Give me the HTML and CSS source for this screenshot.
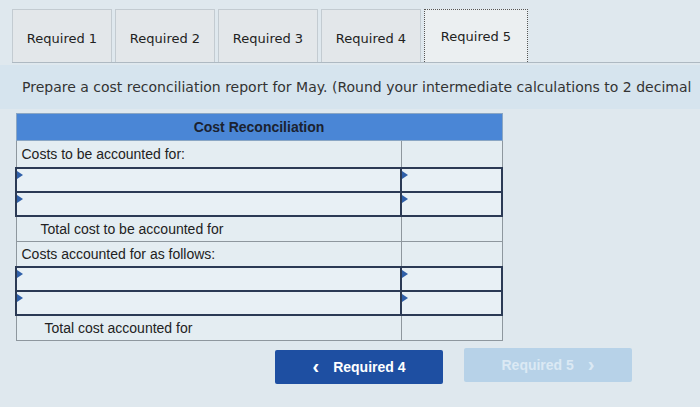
FILE: index.html
```html
<!DOCTYPE html>
<html>
<head>
<meta charset="utf-8">
<link rel="stylesheet" href="styles.css">
</head>
<body>
<div class="page">
  <div class="tabs">
    <div class="tab">Required 1</div>
    <div class="tab">Required 2</div>
    <div class="tab">Required 3</div>
    <div class="tab">Required 4</div>
    <div class="tab active">Required 5</div>
  </div>
  <div class="instr">Prepare a cost reconciliation report for May. (Round your intermediate calculations to 2 decimal</div>
  <table class="recon">
    <colgroup><col class="c1"><col class="c2"></colgroup>
    <thead>
      <tr><th colspan="2">Cost Reconciliation</th></tr>
    </thead>
    <tbody>
      <tr class="label first"><td class="lbl">Costs to be accounted for:</td><td></td></tr>
      <tr class="inp"><td><span class="mark"></span></td><td><span class="mark"></span></td></tr>
      <tr class="inp"><td><span class="mark"></span></td><td><span class="mark"></span></td></tr>
      <tr class="label"><td class="lbl ind1">Total cost to be accounted for</td><td></td></tr>
      <tr class="label"><td class="lbl">Costs accounted for as follows:</td><td></td></tr>
      <tr class="inp"><td><span class="mark"></span></td><td><span class="mark"></span></td></tr>
      <tr class="inp"><td><span class="mark"></span></td><td><span class="mark"></span></td></tr>
      <tr class="label"><td class="lbl ind2">Total cost accounted for</td><td></td></tr>
    </tbody>
  </table>
  <div class="nav">
    <button class="btn prev"><span class="chev">&lsaquo;</span>Required 4</button>
    <button class="btn next">Required 5<span class="chev">&rsaquo;</span></button>
  </div>
</div>
</body>
</html>
```
FILE: styles.css
```css
html, body {
  margin: 0;
  padding: 0;
  background: #dfe8ee;
  width: 700px;
  height: 407px;
  overflow: hidden;
}
.page {
  padding: 9px 0 0 12px;
  font-family: "DejaVu Sans", Verdana, sans-serif;
}
.tabs {
  display: flex;
  height: 53px;
  border-bottom: 1px solid #aeb9c2;
  margin-right: -12px;
}
.tab {
  width: 100px;
  box-sizing: border-box;
  border: 1px solid #c3cbd1;
  border-bottom: none;
  background: #e3e7ea;
  margin-right: 3px;
  display: flex;
  align-items: center;
  justify-content: center;
  padding-top: 4px;
  font-size: 13px;
  color: #222;
}
.tab.active {
  background: #ebeff1;
  border: 1px dotted #555;
  border-bottom: none;
  width: 104px;
  padding-top: 0;
}
.instr {
  margin: 2px 0 0 -12px;
  height: 44px;
  padding-left: 22px;
  background: #d6e4ee;
  display: flex;
  align-items: center;
  white-space: nowrap;
  font-size: 14px;
  color: #333;
}
.recon {
  margin: 4px 0 0 3px;
  border-collapse: collapse;
  table-layout: fixed;
  width: 486px;
  font-family: "Liberation Sans", Arial, sans-serif;
  font-size: 14px;
  color: #222;
}
.recon col.c1 { width: 385px; }
.recon col.c2 { width: 101px; }
.recon th {
  background: #4a86d6;
  height: 26px;
  padding: 0;
  font-weight: bold;
  font-size: 14px;
  color: #1b2230;
  border: 1px solid #8aa6c4;
}
.recon td {
  border: 1px solid #8e979e;
  background: #e4edf2;
  height: 24px;
  padding: 0;
  position: relative;
}
.recon tr.first td { height: 26px; }
.recon td.lbl { padding-left: 5px; }
.recon td.ind1 { padding-left: 24px; }
.recon td.ind2 { padding-left: 28px; }
.recon tr.inp td {
  border: 2px solid #2b3a55;
  background: #e8f0f5;
  height: 22px;
}
.mark {
  position: absolute;
  left: 0;
  top: 2px;
  width: 0;
  height: 0;
  border-top: 4px solid transparent;
  border-bottom: 4px solid transparent;
  border-left: 6px solid #2f5fa8;
}
.nav {
  display: flex;
  margin: 9px 0 0 263px;
  gap: 21px;
}
.btn {
  width: 168px;
  height: 34px;
  border: none;
  border-radius: 2px;
  font-family: "Liberation Sans", Arial, sans-serif;
  font-weight: bold;
  font-size: 14px;
  display: flex;
  align-items: center;
  justify-content: center;
  padding: 0;
}
.btn.prev {
  background: #1e4fa2;
  color: #fff;
}
.btn.next {
  background: #b7d2e8;
  color: #dbe9f4;
  margin-top: -2px;
}
.chev {
  font-size: 20px;
  font-weight: bold;
  line-height: 1;
  margin: -3px 14px 0 14px;
}
.btn.prev .chev { margin-left: 0; }
.btn.next .chev { margin-right: 0; }
```
